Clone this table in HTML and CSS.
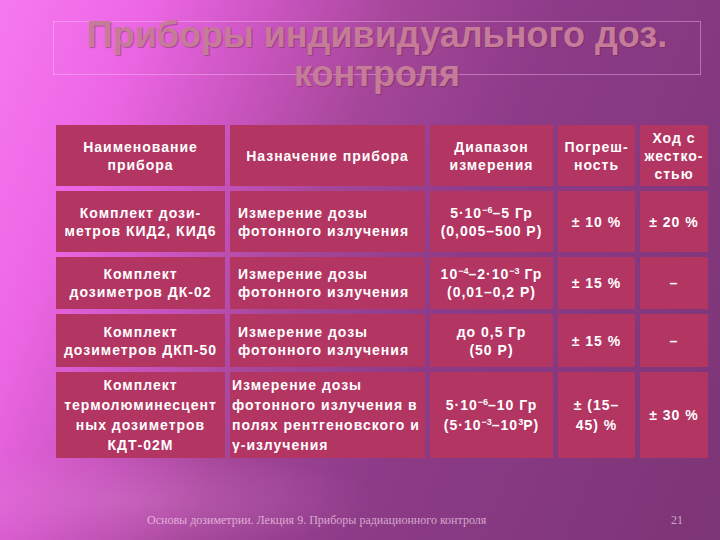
FILE: index.html
```html
<!DOCTYPE html>
<html lang="ru">
<head>
<meta charset="utf-8">
<title>Приборы индивидуального доз. контроля</title>
<link rel="stylesheet" href="styles.css">
</head>
<body>
<div class="slide">
  <div class="title-frame"></div>
  <h1 class="title">Приборы индивидуального доз.<br>контроля</h1>
  <div class="table">
    <div class="cell"><div>Наименование<br>прибора</div></div>
    <div class="cell"><div>Назначение прибора</div></div>
    <div class="cell"><div>Диапазон<br>измерения</div></div>
    <div class="cell"><div>Погреш-<br>ность</div></div>
    <div class="cell"><div>Ход с<br>жестко-<br>стью</div></div>

    <div class="cell"><div>Комплект дози-<br>метров КИД2, КИД6</div></div>
    <div class="cell left"><div>Измерение дозы<br>фотонного излучения</div></div>
    <div class="cell"><div>5·10<span class="sup">−6</span>–5 Гр<br>(0,005–500 Р)</div></div>
    <div class="cell"><div>± 10 %</div></div>
    <div class="cell"><div>± 20 %</div></div>

    <div class="cell"><div>Комплект<br>дозиметров ДК-02</div></div>
    <div class="cell left"><div>Измерение дозы<br>фотонного излучения</div></div>
    <div class="cell"><div>10<span class="sup">−4</span>–2·10<span class="sup">−3</span> Гр<br>(0,01–0,2 Р)</div></div>
    <div class="cell"><div>± 15 %</div></div>
    <div class="cell"><div>–</div></div>

    <div class="cell"><div>Комплект<br>дозиметров ДКП-50</div></div>
    <div class="cell left"><div>Измерение дозы<br>фотонного излучения</div></div>
    <div class="cell"><div>до 0,5 Гр<br>(50 Р)</div></div>
    <div class="cell"><div>± 15 %</div></div>
    <div class="cell"><div>–</div></div>

    <div class="cell tall"><div>Комплект<br>термолюминесцент<br>ных дозиметров<br>КДТ-02М</div></div>
    <div class="cell tall left tight"><div>Измерение дозы<br>фотонного излучения в<br>полях рентгеновского и<br>γ-излучения</div></div>
    <div class="cell tall"><div>5·10<span class="sup">−6</span>–10 Гр<br>(5·10<span class="sup">−3</span>–10<span class="sup">3</span>Р)</div></div>
    <div class="cell tall"><div>± (15–<br>45) %</div></div>
    <div class="cell tall"><div>± 30 %</div></div>
  </div>
  <footer class="footer">
    <span>Основы дозиметрии. Лекция 9. Приборы радиационного контроля</span>
    <span>21</span>
  </footer>
</div>
</body>
</html>
```
FILE: styles.css
```css
html, body {
  margin: 0;
  padding: 0;
}

body {
  width: 720px;
  height: 540px;
  overflow: hidden;
}

.slide {
  position: relative;
  width: 720px;
  height: 540px;
  box-sizing: border-box;
  padding-top: 15px;
  font-family: "Liberation Sans", Arial, sans-serif;
  background:
    radial-gradient(ellipse 260px 50px at 120px 500px, rgba(230, 140, 220, 0.3), rgba(230, 140, 220, 0) 100%),
    linear-gradient(112deg, #f679f0 0%, #ec66e4 16%, #cb55c1 29%, #a54699 43%, #8d3b88 60%, #7c3576 100%);
}

.title-frame {
  position: absolute;
  left: 53px;
  top: 21px;
  width: 646px;
  height: 52px;
  border: 1px solid rgba(255, 200, 250, 0.4);
}

.title {
  position: relative;
  margin: 0;
  padding-left: 34px;
  text-align: center;
  font-size: 36px;
  line-height: 39px;
  font-weight: bold;
  color: #c47c98;
  text-shadow: 1px 1px 1px rgba(110, 30, 80, 0.45);
}

.table {
  display: grid;
  grid-template-columns: 169px 195px 123px 77px 68px;
  grid-template-rows: 61px 61px 52px 53px 86px;
  gap: 5px;
  width: max-content;
  margin: 32px 0 0 56px;
}

.cell {
  display: flex;
  align-items: center;
  justify-content: center;
  text-align: center;
  background: #b33562;
  color: #ffffff;
  font-size: 14px;
  font-weight: bold;
  letter-spacing: 1px;
  line-height: 18px;
  white-space: nowrap;
}

.cell.left {
  justify-content: flex-start;
  text-align: left;
  padding-left: 8px;
}

.cell.tall {
  line-height: 20px;
}

.cell.tight {
  padding-left: 2px;
}

.sup {
  font-size: 9px;
  line-height: 0;
  vertical-align: 5px;
  letter-spacing: 0;
}

.footer {
  display: flex;
  justify-content: space-between;
  margin-top: 55px;
  padding: 0 37px 0 147px;
  font-family: "Liberation Serif", "Times New Roman", serif;
  font-size: 12px;
  line-height: 14px;
  color: rgba(255, 225, 245, 0.65);
}
```
